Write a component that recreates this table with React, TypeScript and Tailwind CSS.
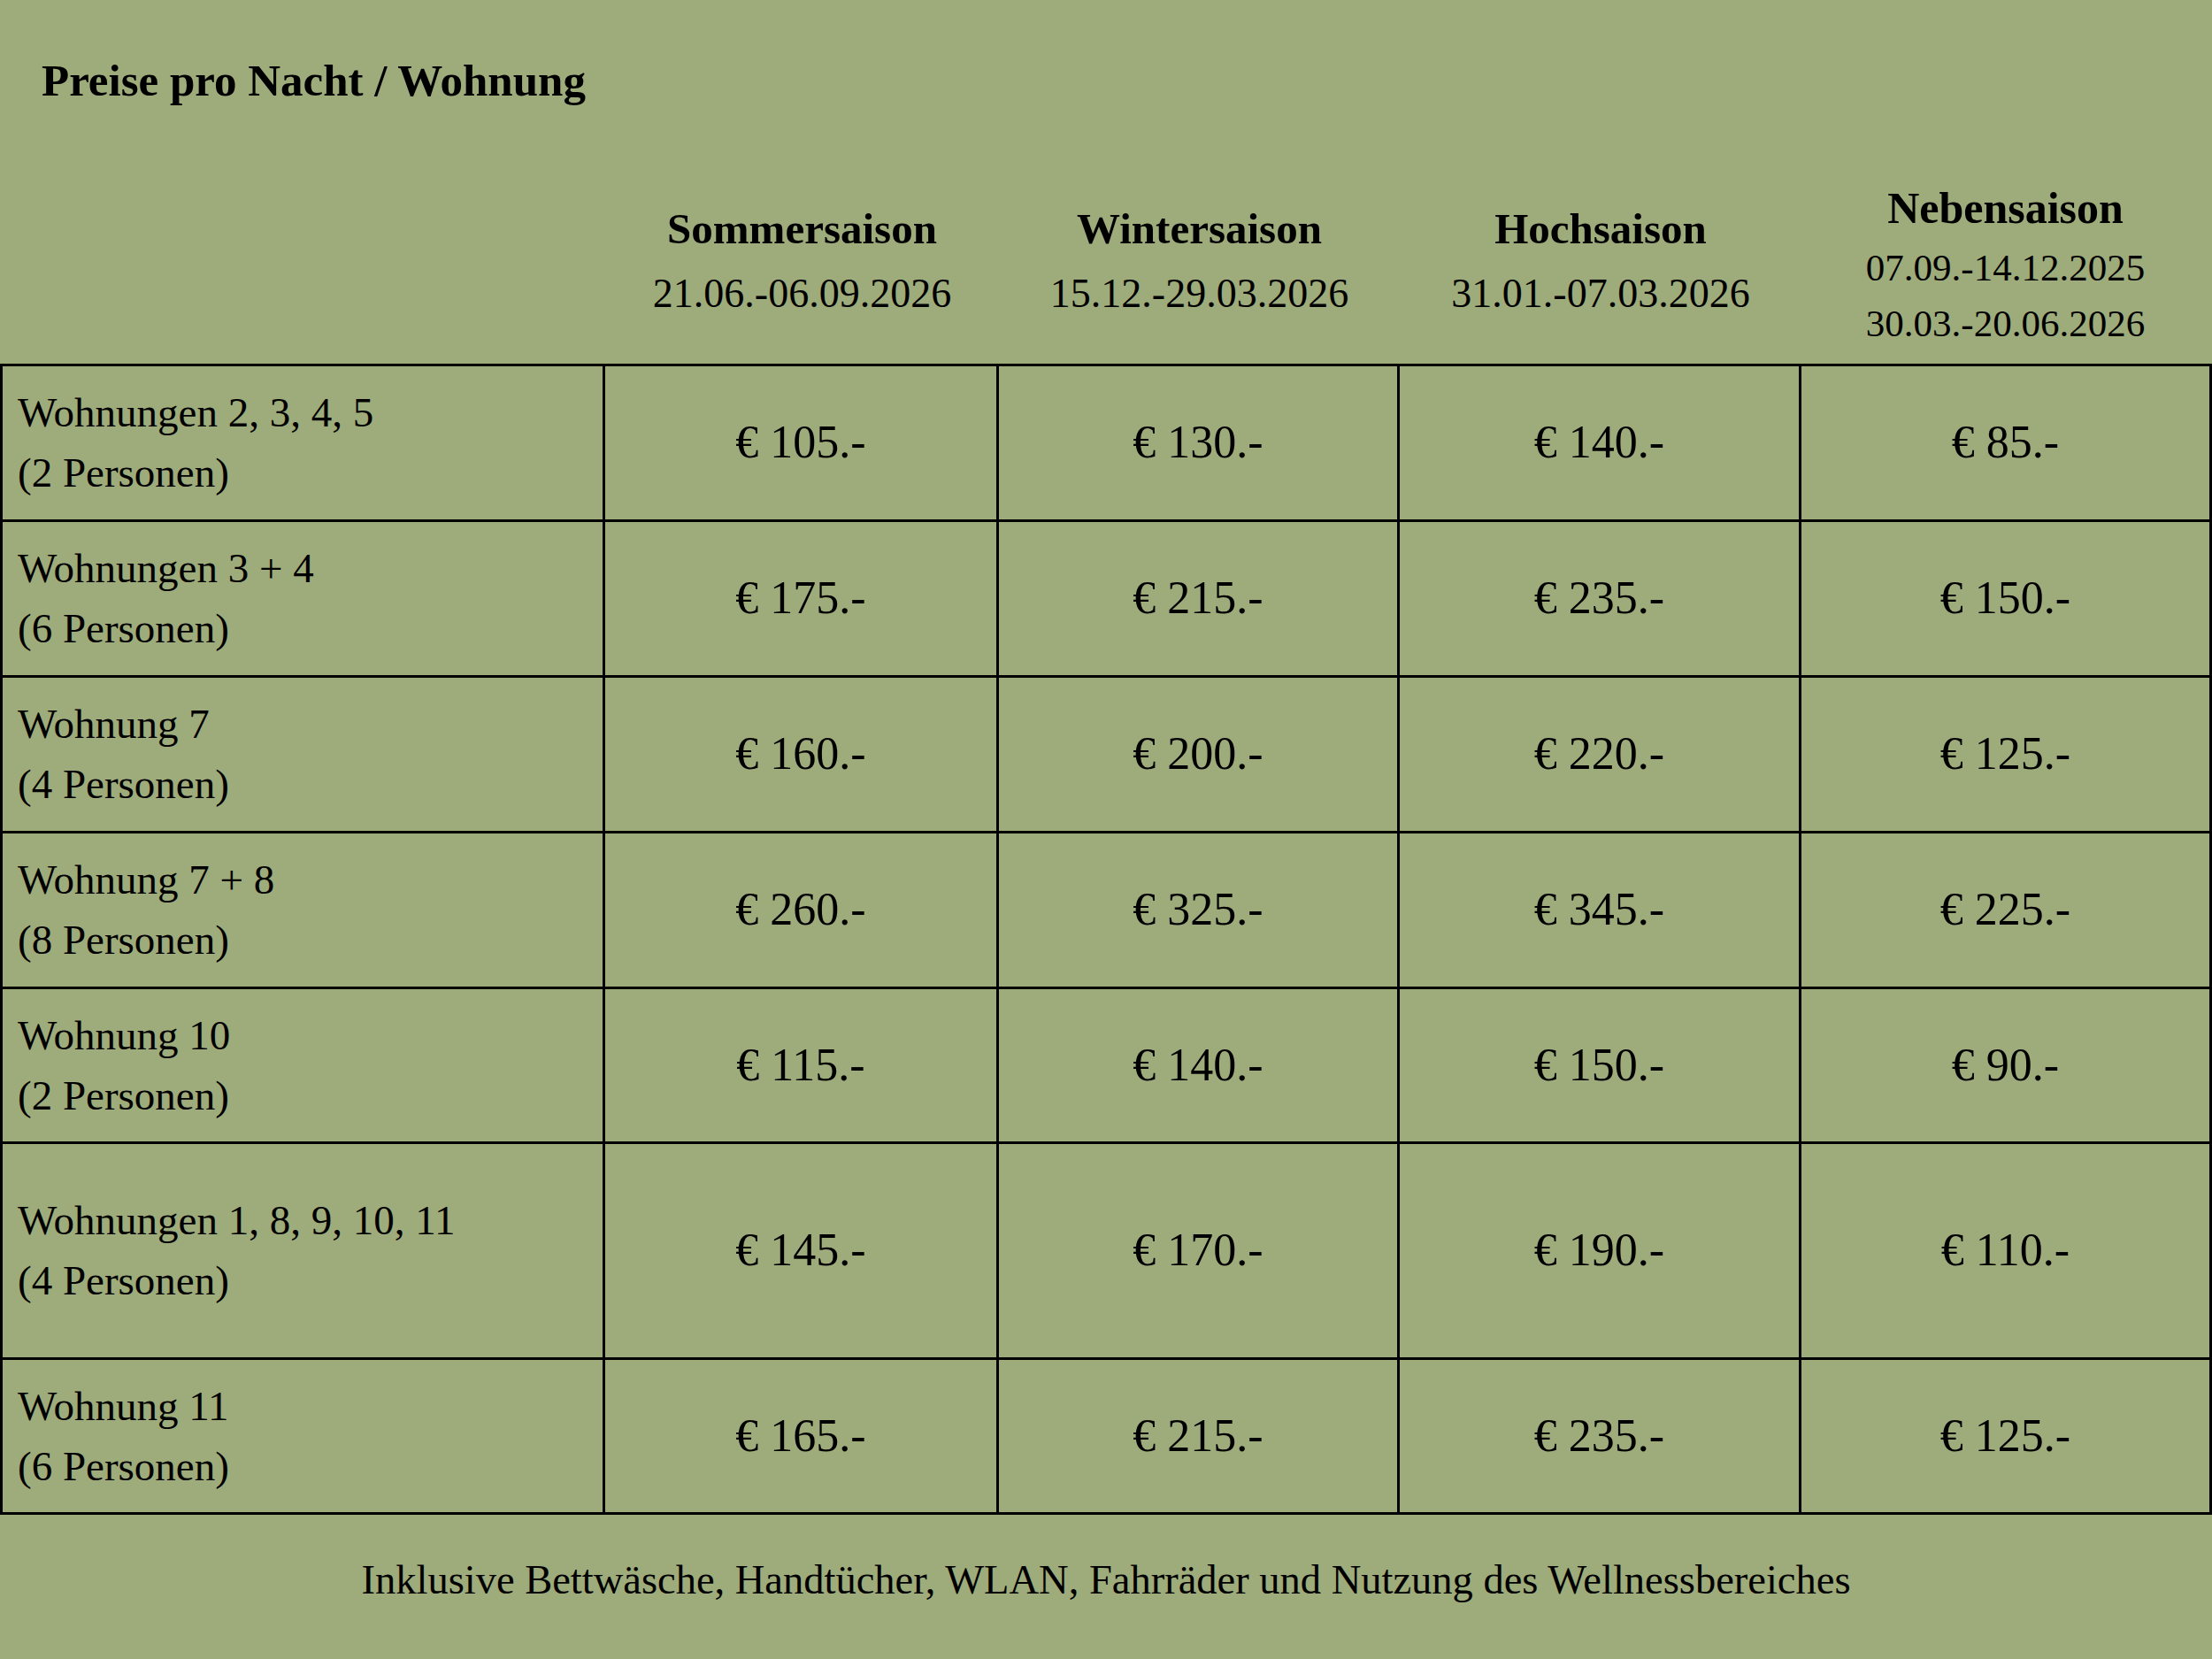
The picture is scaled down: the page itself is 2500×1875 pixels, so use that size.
import React from "react";

const rows: { label: [string, string]; prices: string[] }[] = [
  { label: ["Wohnungen 2, 3, 4, 5", "(2 Personen)"], prices: ["€ 105.-", "€ 130.-", "€ 140.-", "€ 85.-"] },
  { label: ["Wohnungen 3 + 4", "(6 Personen)"], prices: ["€ 175.-", "€ 215.-", "€ 235.-", "€ 150.-"] },
  { label: ["Wohnung 7", "(4 Personen)"], prices: ["€ 160.-", "€ 200.-", "€ 220.-", "€ 125.-"] },
  { label: ["Wohnung 7 + 8", "(8 Personen)"], prices: ["€ 260.-", "€ 325.-", "€ 345.-", "€ 225.-"] },
  { label: ["Wohnung 10", "(2 Personen)"], prices: ["€ 115.-", "€ 140.-", "€ 150.-", "€ 90.-"] },
  { label: ["Wohnungen 1, 8, 9, 10, 11", "(4 Personen)"], prices: ["€ 145.-", "€ 170.-", "€ 190.-", "€ 110.-"] },
  { label: ["Wohnung 11", "(6 Personen)"], prices: ["€ 165.-", "€ 215.-", "€ 235.-", "€ 125.-"] },
];

const seasons = [
  { name: "Sommersaison", dates: ["21.06.-06.09.2026"] },
  { name: "Wintersaison", dates: ["15.12.-29.03.2026"] },
  { name: "Hochsaison", dates: ["31.01.-07.03.2026"] },
];

export default function App() {
  return (
    <div
      className="w-[2500px] h-[1875px] bg-[#9eab7b] text-black pt-[61px]"
      style={{ fontFamily: '"Liberation Serif", "Times New Roman", serif' }}
    >
      <h1 className="pl-[47px] text-[51px] leading-[60px] font-bold">Preise pro Nacht / Wohnung</h1>

      <div className="grid grid-cols-[681px_445px_453px_454px_1fr] h-[289.5px] px-[3px]">
        <div />
        {seasons.map((s) => (
          <div key={s.name} className="flex flex-col items-center pt-[113px]">
            <div className="text-[49px] leading-[50px] font-bold">{s.name}</div>
            {s.dates.map((d) => (
              <div key={d} className="text-[46px] leading-[50px] mt-[23px]">
                {d}
              </div>
            ))}
          </div>
        ))}
        <div className="flex flex-col items-center pt-[89px]">
          <div className="text-[50px] leading-[50px] font-bold">Nebensaison</div>
          <div className="text-[43px] leading-[63px] mt-[11px]">07.09.-14.12.2025</div>
          <div className="text-[43px] leading-[63px]">30.03.-20.06.2026</div>
        </div>
      </div>

      <div className="grid grid-cols-[678px_442px_450px_451px_1fr] grid-rows-[173px_173px_173px_173px_172.5px_240.5px_172.5px] gap-[3px] p-[3px] bg-black">
        {rows.map((r) => (
          <React.Fragment key={r.label[0]}>
            <div className="bg-[#9eab7b] flex flex-col justify-center pl-[17px] text-[47px] leading-[68px]">
              <div>{r.label[0]}</div>
              <div>{r.label[1]}</div>
            </div>
            {r.prices.map((p, i) => (
              <div key={i} className="bg-[#9eab7b] flex items-center justify-center text-[52px]">
                {p}
              </div>
            ))}
          </React.Fragment>
        ))}
      </div>

      <p className="mt-[44px] text-center text-[46.5px] leading-[60px]">
        Inklusive Bettwäsche, Handtücher, WLAN, Fahrräder und Nutzung des Wellnessbereiches
      </p>
    </div>
  );
}
